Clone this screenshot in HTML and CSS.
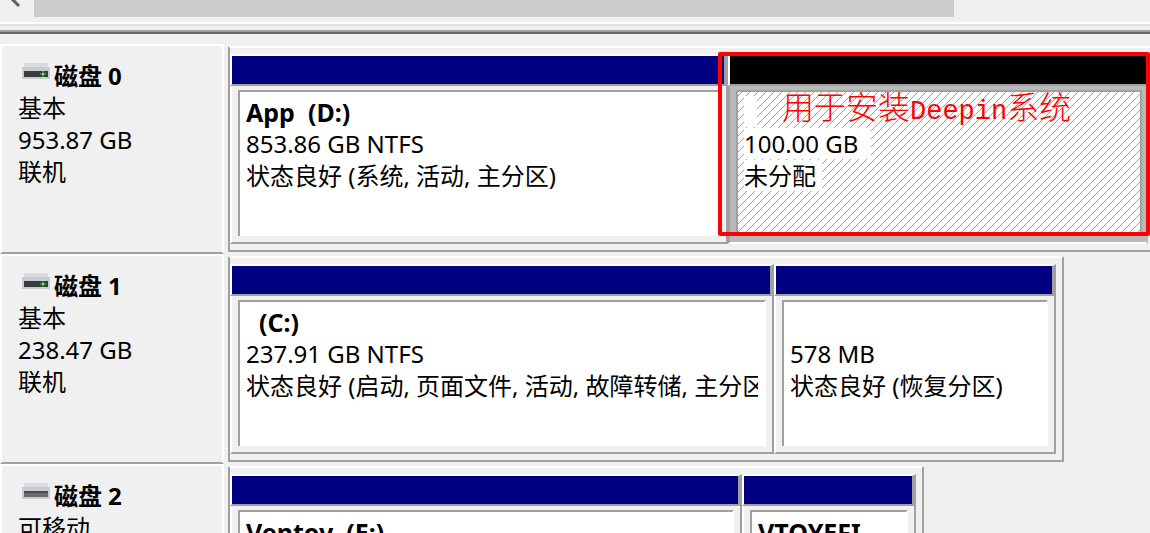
FILE: index.html
```html
<!DOCTYPE html>
<html lang="zh-CN">
<head>
    <meta charset="UTF-8">
    <meta name="viewport" content="width=device-width, initial-scale=1.0">
    <title>磁盘管理</title>
    <link rel="stylesheet" href="styles.css">
</head>
<body>
    <div class="scrollbar">
        <button class="scroll-left" aria-label="向左滚动">
            <svg width="34" height="17" viewBox="0 0 34 17"><path d="M10-3L19 6" fill="none" stroke="#606060" stroke-width="3"/></svg>
        </button>
        <div class="thumb"></div>
    </div>
    <div class="splitter"></div>

    <main class="disks">
        <section class="disk">
            <div class="info">
                <h2>
                    <svg class="icon" width="28" height="16" viewBox="0 0 28 16">
                        <path d="M2 0H26V4H28V16H0V4H2Z" fill="#c9ccd2"/>
                        <path d="M2 0H26V4H2Z" fill="#d9dbdf"/>
                        <path d="M2 8H26V14H2Z" fill="#3c3c3c"/>
                        <path d="M18 10H24V12H18ZM20 8H22V14H20Z" fill="#2f8f2f"/>
                        <path d="M20 10H22V12H20Z" fill="#5dff5d"/>
                    </svg>
                    磁盘 <span>0</span>
                </h2>
                <p>基本</p>
                <p>953.87 GB</p>
                <p>联机</p>
            </div>
            <div class="frame frame-0">
                <div class="volume vol-d">
                    <div class="bar"></div>
                    <div class="body">
                        <div class="inset">
                            <h3>App&nbsp; (D:)</h3>
                            <p>853.86 GB NTFS</p>
                            <p>状态良好 (系统, 活动, 主分区)</p>
                        </div>
                    </div>
                </div>
                <div class="volume vol-free unallocated">
                    <div class="bar"></div>
                    <div class="body">
                        <div class="inset">
                            <h3><span>&nbsp;&nbsp;</span></h3>
                            <p><span>100.00 GB&nbsp;&nbsp;</span></p>
                            <p><span>未分配&nbsp;</span></p>
                        </div>
                    </div>
                    <div class="note">用于安装<span>Deepin</span>系统</div>
                </div>
            </div>
        </section>

        <section class="disk">
            <div class="info">
                <h2>
                    <svg class="icon" width="28" height="16" viewBox="0 0 28 16">
                        <path d="M2 0H26V4H28V16H0V4H2Z" fill="#c9ccd2"/>
                        <path d="M2 0H26V4H2Z" fill="#d9dbdf"/>
                        <path d="M2 8H26V14H2Z" fill="#3c3c3c"/>
                        <path d="M18 10H24V12H18ZM20 8H22V14H20Z" fill="#2f8f2f"/>
                        <path d="M20 10H22V12H20Z" fill="#5dff5d"/>
                    </svg>
                    磁盘 <span>1</span>
                </h2>
                <p>基本</p>
                <p>238.47 GB</p>
                <p>联机</p>
            </div>
            <div class="frame frame-1">
                <div class="volume vol-c">
                    <div class="bar"></div>
                    <div class="body">
                        <div class="inset">
                            <h3>&nbsp; (C:)</h3>
                            <p>237.91 GB NTFS</p>
                            <p>状态良好 (启动, 页面文件, 活动, 故障转储, 主分区)</p>
                        </div>
                    </div>
                </div>
                <div class="volume vol-recovery">
                    <div class="bar"></div>
                    <div class="body">
                        <div class="inset">
                            <h3>&nbsp;</h3>
                            <p>578 MB</p>
                            <p>状态良好 (恢复分区)</p>
                        </div>
                    </div>
                </div>
            </div>
        </section>

        <section class="disk">
            <div class="info">
                <h2>
                    <svg class="icon" width="28" height="16" viewBox="0 0 28 16">
                        <path d="M2 0H26V4H28V16H0V4H2Z" fill="#c9ccd2"/>
                        <path d="M2 0H26V4H2Z" fill="#d9dbdf"/>
                        <path d="M2 8H26V14H2Z" fill="#6a6a6a"/>
                        <path d="M2 8H26V10H2Z" fill="#4a4a4a"/>
                    </svg>
                    磁盘 <span>2</span>
                </h2>
                <p>可移动</p>
            </div>
            <div class="frame frame-2">
                <div class="volume vol-e">
                    <div class="bar"></div>
                    <div class="body">
                        <div class="inset">
                            <h3>Ventoy&nbsp; (E:)</h3>
                        </div>
                    </div>
                </div>
                <div class="volume vol-efi">
                    <div class="bar"></div>
                    <div class="body">
                        <div class="inset">
                            <h3>VTOYEFI</h3>
                        </div>
                    </div>
                </div>
            </div>
        </section>
    </main>
</body>
</html>
```
FILE: styles.css
```css
* {
    box-sizing: border-box;
}
body {
    margin: 0;
    height: 100vh;
    overflow: hidden;
    background-color: #f0f0f0;
    color: #000;
    font-family: "Noto Sans", "Noto Sans CJK SC", sans-serif;
    font-size: 24px;
    line-height: 32px;
}
h2, h3, p {
    margin: 0;
    font-size: 24px;
    font-weight: normal;
    white-space: nowrap;
}
h2, h3 {
    font-weight: bold;
}
h3 {
    font-size: 25px;
}

/* horizontal scrollbar of the volume list */
.scrollbar {
    display: flex;
    height: 17px;
}
.scroll-left {
    width: 34px;
    padding: 0;
    border: none;
    background: none;
}
.scroll-left svg {
    display: block;
}
.thumb {
    width: 80%;
    background-color: #cdcdcd;
}
.splitter {
    height: 12px;
    margin: 5px 0 10px;
    border-top: 2px solid #fff;
    border-bottom: 2px solid #696969;
    box-shadow: inset 0 2px #e3e3e3, inset 0 -2px #a0a0a0;
}

.disk {
    --area: calc(100% - 230px);
    display: flex;
    gap: 4px;
    height: 210px;
    overflow: hidden;
}
.info {
    flex: none;
    width: 224px;
    padding: 14px 16px;
    border: 2px solid #fff;
    border-bottom-color: #a0a0a0;
}
.info h2 {
    display: flex;
    align-items: center;
    gap: 4px;
    padding-left: 4px;
}
.info h2 span {
    margin-left: 2px;
}
.icon {
    margin-bottom: 10px;
}

.frame {
    display: flex;
    flex: none;
    margin: 2px 0;
    padding: 6px 6px 6px 0;
    border: 2px solid #a0a0a0;
    border-top-color: #fff;
}
.frame-0 {
    width: calc(var(--area) + 8px);
}
.frame-1 {
    width: calc(var(--area) * 0.9065 + 2px);
}
.frame-2 {
    width: calc(var(--area) * 0.7543 + 2px);
}

.volume {
    display: flex;
    flex-direction: column;
    min-width: 0;
    flex-basis: 0;
}
.vol-d { flex-grow: 498; }
.vol-free { flex-grow: 420; }
.vol-c { flex-grow: 544; }
.vol-recovery { flex-grow: 282; }
.vol-e { flex-grow: 512; }
.vol-efi { flex-grow: 174; }

.bar {
    height: 32px;
    border-top: 2px solid #fff;
    border-left: 2px solid #fff;
    border-right: 4px solid #a0a0a0;
    border-bottom: 2px solid #a0a0a0;
    background-color: #000080;
}
.body {
    flex: 1;
    display: flex;
    padding: 4px 6px 6px;
    border: 2px solid #a0a0a0;
    border-top: none;
    border-left-color: #fff;
}
.inset {
    flex: 1;
    min-width: 0;
    padding: 4px 6px;
    border-top: 2px solid #a0a0a0;
    border-left: 2px solid #a0a0a0;
    border-right: 2px solid #fff;
    background-color: #fff;
}
.inset h3, .inset p {
    overflow: hidden;
}

/* selected free space */
.unallocated {
    position: relative;
}
.unallocated .bar {
    border-right-width: 2px;
    background-color: #000;
}
.unallocated .body {
    padding-right: 4px;
    border-color: #a0a0a0;
    border-right-color: #b9b9b9;
    border-bottom-color: #fff;
    background-color: #b9b9b9;
}
.unallocated .inset {
    border-right-color: #a0a0a0;
    background: #fff url("data:image/svg+xml,%3Csvg xmlns='http://www.w3.org/2000/svg' width='8' height='8' shape-rendering='crispEdges'%3E%3Cpath d='M7 0h1v1h-1zM6 1h1v1h-1zM5 2h1v1h-1zM4 3h1v1h-1zM3 4h1v1h-1zM2 5h1v1h-1zM1 6h1v1h-1zM0 7h1v1h-1z' fill='%23a0a0a0'/%3E%3C/svg%3E") 4px 0;
}
.unallocated .inset span {
    display: inline-block;
    height: 31px;
    background-color: #fff;
    vertical-align: top;
}

/* red marker drawn over the free space */
.note {
    position: absolute;
    top: -2px;
    left: -10px;
    right: -2px;
    height: 184px;
    padding: 36px 0 0 60px;
    border: 4px solid #f00;
    border-radius: 2px;
    color: #f00;
    font-family: "Liberation Serif", "Noto Sans CJK SC", serif;
    font-size: 32px;
    font-weight: 300;
    white-space: nowrap;
}
.note span {
    font-family: "Liberation Mono", monospace;
    font-size: 27px;
}
```
